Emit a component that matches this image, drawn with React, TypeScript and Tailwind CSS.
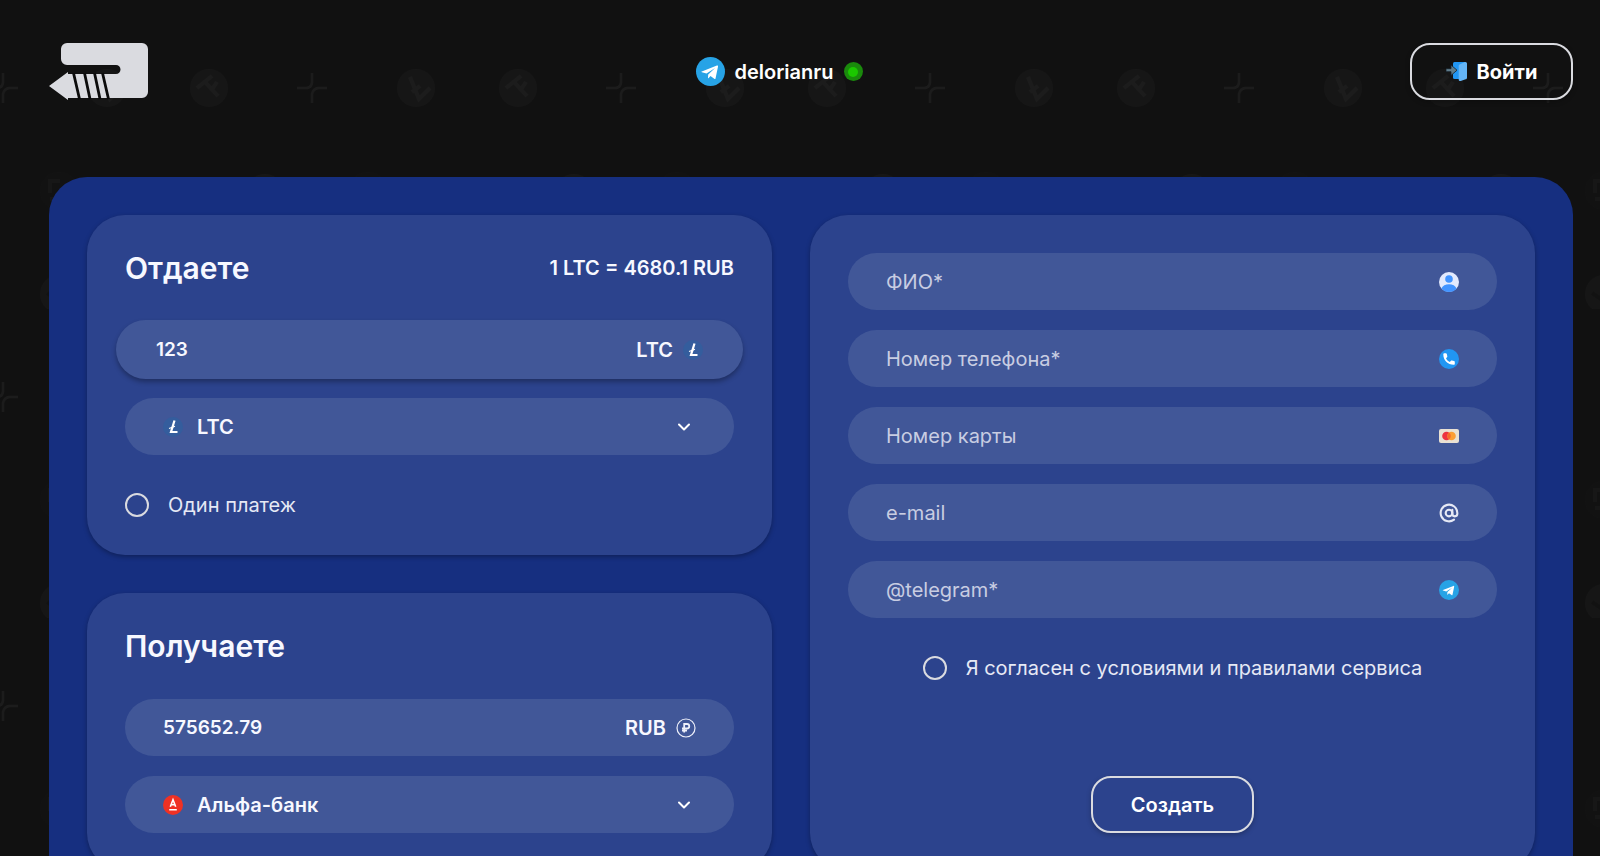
import type { ReactNode } from "react";
import { AtSign } from "lucide-react";

function Logo() {
  return (
    <svg className="w-[99px] h-[57px]" viewBox="0 0 99 57" aria-hidden="true">
      <path
        fill="#dadbe0"
        d="M18 0H93a6 6 0 0 1 6 6V49a6 6 0 0 1-6 6H19V57L0 43L19 29V31H67a4.5 4.5 0 0 0 0-9H18a6 6 0 0 1-6-6V6a6 6 0 0 1 6-6z"
      />
      <path stroke="#0b0b0b" strokeWidth="2.8" d="M24.5 30l6 26M35.5 30l5.5 26M45.5 30l5.5 26M53.5 30l6 26" />
    </svg>
  );
}

function TelegramIcon({ className }: { className: string }) {
  return (
    <svg className={className} viewBox="0 0 24 24" aria-hidden="true">
      <circle cx="12" cy="12" r="12" fill="#27a3e6" />
      <path fill="#fff" d="M4.8 12.1L17.3 7.1c.6-.2 1.1.1.9 1l-2 9.5c-.1.7-.6.9-1.1.5l-3.1-2.3-1.5 1.5c-.2.2-.3.3-.6.3l.2-3.2 5.7-5.2-7.1 4.5-3.8-1c-.7-.2-.7-.5-.1-.6z" />
    </svg>
  );
}

function LoginIcon() {
  return (
    <svg className="w-[21px] h-[19px]" viewBox="0 0 21 19" aria-hidden="true">
      <path fill="#2196f3" d="M8.5 0H19v17H8.5A1.5 1.5 0 0 1 7 15.5v-14A1.5 1.5 0 0 1 8.5 0z" />
      <path fill="#64b5f6" d="M19 0h.5A1.5 1.5 0 0 1 21 1.5v14.2c0 .8-.5 1.4-1.3 1.6l-5 1.6c-1 .3-2-.4-2-1.5V4c0-.8.5-1.5 1.3-1.7z" />
      <path fill="#607d8b" stroke="#14202a" strokeWidth="0.8" d="M0 6.7h5V3L11 8.2 5 13.4V9.7H0z" />
    </svg>
  );
}

function LtcIcon() {
  return (
    <svg className="size-5 shrink-0" viewBox="0 0 20 20" aria-hidden="true">
      <circle cx="10" cy="10" r="10" fill="#345d9d" />
      <path fill="none" stroke="#fff" strokeWidth="2.2" d="M11.5 3.5L8 15H14.5" />
      <path stroke="#fff" strokeWidth="1.2" d="M6 11.5l6-2.3" />
    </svg>
  );
}

function RubIcon() {
  return (
    <svg className="size-5 shrink-0" viewBox="0 0 20 20" fill="none" stroke="#eef0fa" aria-hidden="true">
      <circle cx="10" cy="10" r="9" strokeWidth="1.2" />
      <path strokeWidth="1.8" d="M8.2 14.5V6h2.8a2.2 2.2 0 0 1 0 4.5H6M6 12.7h5" />
    </svg>
  );
}

function AlfaIcon() {
  return (
    <svg className="size-5 shrink-0" viewBox="0 0 20 20" aria-hidden="true">
      <circle cx="10" cy="10" r="10" fill="#ef3124" />
      <path fill="none" stroke="#fff" strokeWidth="1.6" d="M7.3 11.8L10 4.8l2.7 7M8.2 9.8h3.6M6.2 14.8h7.6" />
    </svg>
  );
}

function UserIcon() {
  return (
    <svg className="size-5 shrink-0" viewBox="0 0 20 20" aria-hidden="true">
      <circle cx="10" cy="10" r="10" fill="#e3eafd" />
      <circle cx="10" cy="7" r="3.8" fill="#4294ff" />
      <path fill="#4294ff" d="M2.4 16.5C3.5 13.8 6.5 12.3 10 12.3s6.5 1.5 7.6 4.2A10 10 0 0 1 10 20a10 10 0 0 1-7.6-3.5z" />
    </svg>
  );
}

function PhoneIcon() {
  return (
    <svg className="size-5 shrink-0" viewBox="0 0 20 20" aria-hidden="true">
      <circle cx="10" cy="10" r="10" fill="#2196f3" />
      <path fill="#fff" d="M4.3 5.2c0-.6.4-1 .9-1h1.6c.5 0 .9.3 1 .8l.5 2.3c.1.4 0 .8-.3 1L7 9.3c.8 1.7 2 2.900 3.700 3.700l1.100-1.100c.3-.3.7-.4 1-.3l2.200.5c.5.1.8.5.8 1v1.600c0 .6-.4 1-1 1C8.700 15.700 4.300 11.300 4.300 5.200z" />
    </svg>
  );
}

function CardIcon() {
  return (
    <svg className="size-5 shrink-0" viewBox="0 0 20 20" aria-hidden="true">
      <rect y="3" width="20" height="14" rx="2" fill="#e9e1d3" />
      <circle cx="7.5" cy="10" r="4.3" fill="#ed3340" />
      <circle cx="12.5" cy="10" r="4.3" fill="#fb9f35" />
      <path fill="#f4682a" d="M10 6.5a4.3 4.3 0 0 1 0 7 4.3 4.3 0 0 1 0-7z" />
    </svg>
  );
}

function Chevron() {
  return (
    <svg className="w-3 h-2 shrink-0" viewBox="0 0 12 8" fill="none" stroke="#fff" strokeWidth="2" strokeLinecap="round" strokeLinejoin="round" aria-hidden="true">
      <path d="M1 1.5l5 5 5-5" />
    </svg>
  );
}

// Faint crypto-coin wallpaper, tiled every 309px
function Wallpaper() {
  return (
    <svg className="absolute inset-0 w-full h-full" aria-hidden="true">
      <defs>
        <pattern id="coins" width="309" height="309" patternUnits="userSpaceOnUse">
          <g fill="#161616">
            <circle cx="107" cy="88" r="19" />
            <circle cx="209" cy="88" r="19" />
            <circle cx="265" cy="193" r="19" />
            <circle cx="59" cy="294" r="19" />
            <circle cx="162" cy="294" r="19" />
            <circle cx="265" cy="294" r="19" fill="#131313" />
            <circle cx="59" cy="191" r="19" fill="#121212" />
          </g>
          <g fill="none" stroke="#1c1c1c" strokeWidth="2.5">
            <path d="M-12 88H-2Q3 87 3 82V73M18 88H9Q4 89 3 94V103" />
            <path d="M297 88H307Q312 87 312 82V73" />
            <path strokeWidth="4" d="M101 77l9 22 11-11M103 92l8-6" />
            <path strokeWidth="4" d="M197 88l15-12M205 82l13 14M211 91l6-9" />
            <path strokeWidth="4" stroke="#171717" d="M50 193V181H60M50 199H55" />
            <path strokeWidth="4" stroke="#121212" d="M47 293l12 8 12-8" />
          </g>
        </pattern>
      </defs>
      <rect width="100%" height="100%" fill="url(#coins)" />
    </svg>
  );
}

type AmountProps = { label: string; value: string; currency: string; icon: ReactNode; active?: boolean };

function AmountField({ label, value, currency, icon, active }: AmountProps) {
  return (
    <div
      className={`flex items-center gap-2.5 rounded-full bg-[#415798] font-semibold ${
        active ? "-mx-[9px] -my-px h-[59px] px-10 shadow-[0_3px_5px_rgba(0,0,0,0.3)]" : "h-[57px] px-[38px]"
      }`}
    >
      <input aria-label={label} defaultValue={value} className="flex-1 min-w-0 bg-transparent text-[19px] outline-none" />
      <span>{currency}</span>
      {icon}
    </div>
  );
}

function SelectField({ label, option, icon }: { label: string; option: string; icon: ReactNode }) {
  return (
    <label className="flex h-[57px] items-center gap-3.5 rounded-full bg-[#415798] pl-[38px] pr-11 font-semibold">
      {icon}
      <select aria-label={label} className="flex-1 min-w-0 appearance-none bg-transparent outline-none">
        <option>{option}</option>
      </select>
      <Chevron />
    </label>
  );
}

function CheckRow({ children }: { children: ReactNode }) {
  return (
    <label className="flex items-center gap-[19px] h-6 text-[#e6e9f5]">
      <input type="checkbox" className="size-6 shrink-0 appearance-none rounded-full border-2 border-[#dadbe0] checked:bg-[#dadbe0]" />
      {children}
    </label>
  );
}

const contacts = [
  { placeholder: "ФИО*", type: "text", icon: <UserIcon /> },
  { placeholder: "Номер телефона*", type: "tel", icon: <PhoneIcon /> },
  { placeholder: "Номер карты", type: "text", icon: <CardIcon /> },
  { placeholder: "e-mail", type: "email", icon: <AtSign strokeWidth={2.5} className="size-5 shrink-0 text-[#e6e9f5]" /> },
  { placeholder: "@telegram*", type: "text", icon: <TelegramIcon className="size-5 shrink-0" /> },
];

const card = "rounded-[38px] bg-[#2c438d] p-[38px] shadow-[0_2px_5px_rgba(0,0,0,0.3)]";
const outlined =
  "flex h-[57px] min-w-[163px] items-center justify-center gap-2.5 rounded-[20px] border-2 border-[#dadbe0] text-white shadow-[0_2px_5px_rgba(0,0,0,0.25)]";

export default function App() {
  return (
    <div className="relative min-h-screen bg-[#111111] pt-[43px] pr-[27px] pb-10 pl-[49px] font-[Inter,'Noto_Sans',sans-serif] text-[20px] leading-7 text-[#f7f8ff]">
      <Wallpaper />
      <div className="relative">
        <header className="flex items-center justify-between">
          <a href="#" aria-label="Delorian">
            <Logo />
          </a>
          <a href="#" className="flex items-center gap-2.5 font-semibold text-white">
            <TelegramIcon className="size-[29px]" />
            delorianru
            <span className="flex size-[19px] items-center justify-center rounded-full bg-[#1a8a0c]">
              <span className="size-2.5 rounded-full bg-[#1bc800]" />
            </span>
          </a>
          <button type="button" className={`font-bold ${outlined}`}>
            <LoginIcon />
            Войти
          </button>
        </header>

        <main className="mt-[77px] grid grid-cols-[685fr_725fr] gap-[38px] rounded-[38px] bg-[#162f80] p-[38px]">
          <div className="flex flex-col gap-[38px]">
            <section className={card}>
              <div className="flex h-[30px] items-center justify-between">
                <h2 className="text-[30px] font-semibold">Отдаете</h2>
                <span className="font-semibold">1 LTC = 4680.1 RUB</span>
              </div>
              <div className="mt-[38px] mb-[38px] flex flex-col gap-5">
                <AmountField label="Сумма отдаете" value="123" currency="LTC" icon={<LtcIcon />} active />
                <SelectField label="Валюта" option="LTC" icon={<LtcIcon />} />
              </div>
              <CheckRow>Один платеж</CheckRow>
            </section>
            <section className={card}>
              <h2 className="flex h-[30px] items-center text-[30px] font-semibold">Получаете</h2>
              <div className="mt-[38px] flex flex-col gap-5">
                <AmountField label="Сумма получаете" value="575652.79" currency="RUB" icon={<RubIcon />} />
                <SelectField label="Банк" option="Альфа-банк" icon={<AlfaIcon />} />
              </div>
            </section>
          </div>

          <form className={`flex flex-col items-center ${card}`}>
            <div className="mb-[38px] flex w-full flex-col gap-5">
              {contacts.map((field) => (
                <div key={field.placeholder} className="flex h-[57px] items-center rounded-full bg-[#415798] px-[38px]">
                  <input
                    type={field.type}
                    aria-label={field.placeholder}
                    placeholder={field.placeholder}
                    className="flex-1 min-w-0 bg-transparent outline-none placeholder:text-[#c8cde2]"
                  />
                  {field.icon}
                </div>
              ))}
            </div>
            <CheckRow>Я согласен с условиями и правилами сервиса</CheckRow>
            <button type="button" className={`mt-auto font-semibold ${outlined}`}>
              Создать
            </button>
          </form>
        </main>
      </div>
    </div>
  );
}
